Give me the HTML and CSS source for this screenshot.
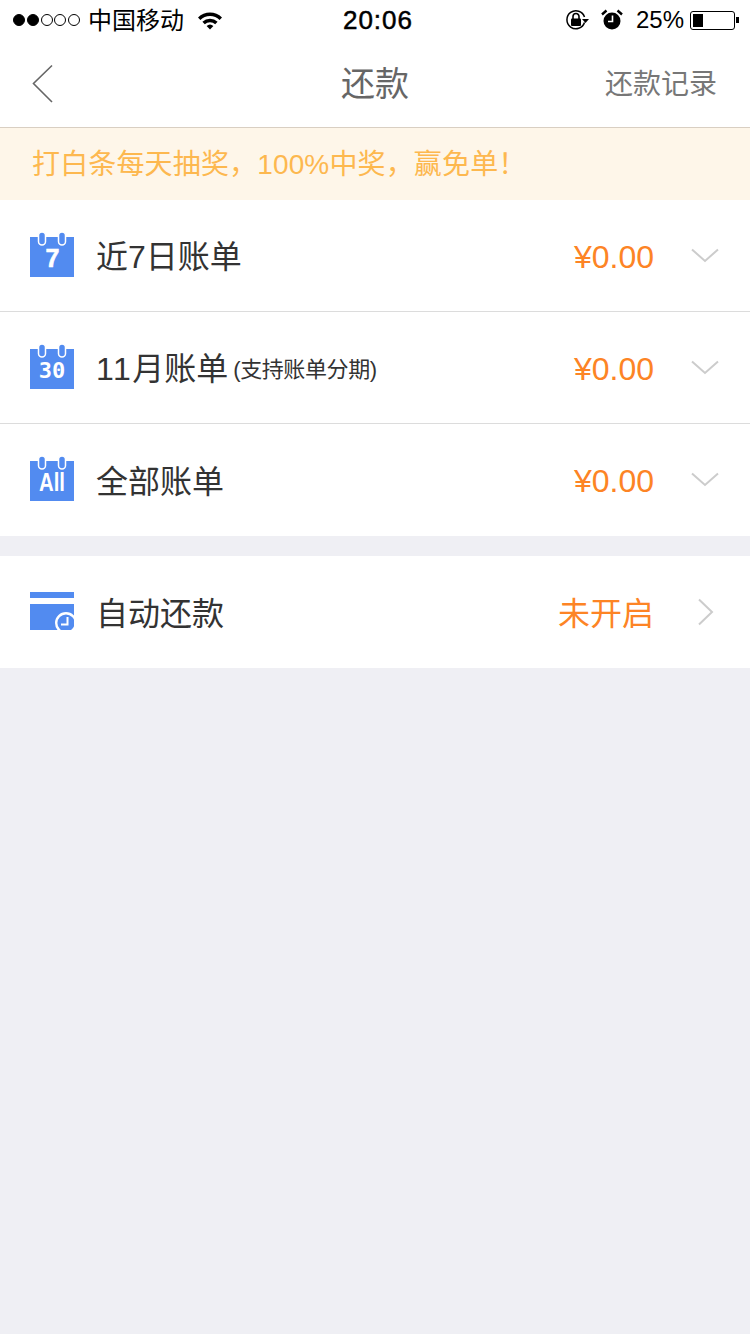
FILE: index.html
```html
<!DOCTYPE html>
<html lang="zh-CN">
<head>
    <meta charset="UTF-8">
    <meta name="viewport" content="width=device-width, initial-scale=1.0">
    <title>还款</title>
    <link rel="stylesheet" href="styles.css">
</head>
<body>
<div class="status-bar">
    <div class="status-left">
        <div class="signal">
            <span class="dot on"></span><span class="dot on"></span><span class="dot"></span><span class="dot"></span><span class="dot"></span>
        </div>
        <span class="carrier">中国移动</span>
        <svg class="wifi" width="26" height="20" viewBox="0 0 26 20">
            <path d="M1 7.5 A17 17 0 0 1 25 7.5 L22.6 10 A13.6 13.6 0 0 0 3.4 10 Z" fill="#000"/>
            <path d="M5.4 11.8 A11 11 0 0 1 20.6 11.8 L18.2 14.2 A7.6 7.6 0 0 0 7.8 14.2 Z" fill="#000"/>
            <path d="M9.6 16 A5 5 0 0 1 16.4 16 L13 19.6 Z" fill="#000"/>
        </svg>
    </div>
    <div class="status-time">20:06</div>
    <div class="status-right">
        <svg class="lock" width="24" height="22" viewBox="0 0 24 22">
            <path d="M19.5 13.5 A9 9 0 1 1 19.5 8" fill="none" stroke="#000" stroke-width="1.5"/>
            <path d="M17 10 L24 10 L20.5 14 Z" fill="#000"/>
            <rect x="6" y="9.5" width="10" height="7.5" rx="1" fill="#000"/>
            <path d="M8 10 V7.5 A3 3 0 0 1 14 7.5 V10" fill="none" stroke="#000" stroke-width="1.6"/>
        </svg>
        <svg class="alarm" width="22" height="22" viewBox="0 0 22 22">
            <circle cx="11" cy="12" r="8.5" fill="#000"/>
            <path d="M1 5.5 L5.5 1.5 M16.5 1.5 L21 5.5" stroke="#000" stroke-width="2.4" fill="none"/>
            <path d="M11.5 6.5 V12.5 H7" stroke="#fff" stroke-width="1.6" fill="none"/>
        </svg>
        <span class="battery-text">25%</span>
        <div class="battery"><div class="battery-fill"></div></div>
        <div class="battery-tip"></div>
    </div>
</div>

<div class="nav">
    <svg class="back" width="24" height="40" viewBox="0 0 24 40">
        <path d="M21 1.5 L2.5 19.5 L21 38" fill="none" stroke="#666" stroke-width="1.6"/>
    </svg>
    <div class="nav-title">还款</div>
    <div class="nav-link">还款记录</div>
</div>

<div class="banner">打白条每天抽奖，100%中奖，赢免单！</div>

<div class="group">
    <div class="row">
        <svg class="icon" width="44" height="46" viewBox="0 0 44 46">
            <path d="M0 6 H44 V46 H0 Z" fill="#528bf0"/>
            <rect x="8.5" y="1" width="7" height="13" rx="3.5" fill="#528bf0" stroke="#fff" stroke-width="1.5"/>
            <rect x="28.5" y="1" width="7" height="13" rx="3.5" fill="#528bf0" stroke="#fff" stroke-width="1.5"/>
            <text class="icon-text icon-seven" x="22.5" y="36" font-size="25" text-anchor="middle">7</text>
        </svg>
        <div class="row-label">近7日账单</div>
        <div class="row-value amount">¥0.00</div>
        <svg class="arrow-down" width="28" height="16" viewBox="0 0 28 16">
            <path d="M1 1.5 L14 13 L27 1.5" fill="none" stroke="#ccc" stroke-width="2"/>
        </svg>
    </div>
    <div class="row">
        <svg class="icon" width="44" height="46" viewBox="0 0 44 46">
            <path d="M0 6 H44 V46 H0 Z" fill="#528bf0"/>
            <rect x="8.5" y="1" width="7" height="13" rx="3.5" fill="#528bf0" stroke="#fff" stroke-width="1.5"/>
            <rect x="28.5" y="1" width="7" height="13" rx="3.5" fill="#528bf0" stroke="#fff" stroke-width="1.5"/>
            <text class="icon-text mono" x="22" y="35" font-size="22" text-anchor="middle">30</text>
        </svg>
        <div class="row-label"><span class="num">11</span>月账单<span class="row-note">(支持账单分期)</span></div>
        <div class="row-value amount">¥0.00</div>
        <svg class="arrow-down" width="28" height="16" viewBox="0 0 28 16">
            <path d="M1 1.5 L14 13 L27 1.5" fill="none" stroke="#ccc" stroke-width="2"/>
        </svg>
    </div>
    <div class="row">
        <svg class="icon" width="44" height="46" viewBox="0 0 44 46">
            <path d="M0 6 H44 V46 H0 Z" fill="#528bf0"/>
            <rect x="8.5" y="1" width="7" height="13" rx="3.5" fill="#528bf0" stroke="#fff" stroke-width="1.5"/>
            <rect x="28.5" y="1" width="7" height="13" rx="3.5" fill="#528bf0" stroke="#fff" stroke-width="1.5"/>
            <text class="icon-text" x="9" y="36" font-size="25" textLength="26" lengthAdjust="spacingAndGlyphs">All</text>
        </svg>
        <div class="row-label">全部账单</div>
        <div class="row-value amount">¥0.00</div>
        <svg class="arrow-down" width="28" height="16" viewBox="0 0 28 16">
            <path d="M1 1.5 L14 13 L27 1.5" fill="none" stroke="#ccc" stroke-width="2"/>
        </svg>
    </div>
</div>

<div class="group group-auto">
    <div class="row">
        <svg class="icon icon-auto" width="44" height="38" viewBox="0 0 44 38">
            <rect x="0" y="0" width="44" height="6" fill="#528bf0"/>
            <rect x="0" y="12" width="44" height="26" fill="#528bf0"/>
            <circle cx="36" cy="31" r="9.8" fill="#528bf0" stroke="#fff" stroke-width="2.4"/>
            <path d="M37.5 25 V32.5 H31" fill="none" stroke="#fff" stroke-width="2"/>
        </svg>
        <div class="row-label">自动还款</div>
        <div class="row-value">未开启</div>
        <svg class="arrow-right" width="28" height="28" viewBox="0 0 28 28">
            <path d="M8 1.5 L21 14 L8 26.5" fill="none" stroke="#ccc" stroke-width="2"/>
        </svg>
    </div>
</div>
</body>
</html>
```

FILE: styles.css
```css
* {
    margin: 0;
    padding: 0;
    box-sizing: border-box;
}

html, body {
    height: 100%;
}

body {
    overflow: hidden;
    background: #efeff4;
    font-family: "Liberation Sans", "Noto Sans CJK SC", sans-serif;
    color: #333;
}

/* status bar */
.status-bar {
    position: relative;
    display: flex;
    justify-content: space-between;
    align-items: center;
    height: 40px;
    padding: 0 11px 0 13px;
    background: #fff;
    color: #000;
}

.status-left,
.status-right {
    display: flex;
    align-items: center;
}

.signal {
    display: flex;
    gap: 1.75px;
}

.dot {
    width: 12px;
    height: 12px;
    border: 1px solid #000;
    border-radius: 50%;
}

.dot.on {
    background: #000;
}

.carrier {
    margin: 0 0 3px 8px;
    font-size: 24px;
}

.wifi {
    margin-left: 13px;
}

.status-time {
    position: absolute;
    left: 6px;
    right: 0;
    text-align: center;
    font-size: 26px;
    letter-spacing: 1px;
    -webkit-text-stroke: 0.5px #000;
    pointer-events: none;
}

.alarm {
    margin-left: 12px;
}

.battery-text {
    margin-left: 13px;
    font-size: 24px;
}

.battery {
    width: 45px;
    height: 19px;
    margin-left: 6px;
    padding: 2px;
    border: 1px solid #000;
    border-radius: 3px;
}

.battery-fill {
    width: 10px;
    height: 100%;
    background: #000;
}

.battery-tip {
    width: 3px;
    height: 6px;
    margin-left: 1px;
    background: #000;
}

/* nav */
.nav {
    display: flex;
    justify-content: space-between;
    align-items: center;
    position: relative;
    height: 88px;
    padding: 0 33px 0 31px;
    background: #fff;
    border-bottom: 1px solid #d9cfc2;
}

.nav-title {
    position: absolute;
    left: 0;
    right: 0;
    text-align: center;
    font-size: 34px;
    line-height: 84px;
    color: #666;
    pointer-events: none;
}

.nav-link {
    margin-bottom: 3px;
    font-size: 28px;
    color: #777;
}

.banner {
    height: 72px;
    padding-left: 32px;
    background: #fef6e9;
    color: #fdb84f;
    font-size: 28px;
    line-height: 74px;
    letter-spacing: 0.15px;
}

/* rows */
.group {
    background: #fff;
}

.group-auto {
    margin-top: 20px;
}

.row {
    display: flex;
    align-items: center;
    height: 112px;
    padding: 0 31px 0 30px;
    border-bottom: 1px solid #dcdcdc;
}

.row:last-child {
    border-bottom: 0;
}

.icon {
    flex-shrink: 0;
    margin-bottom: 4px;
}

.icon-auto {
    margin-bottom: 2px;
}

.icon-text {
    font-family: "Liberation Sans", sans-serif;
    font-weight: 700;
    fill: #fff;
}

.icon-text.mono {
    font-family: "DejaVu Sans Mono", monospace;
}

.icon-seven {
    stroke: #fff;
    stroke-width: 0.6px;
}

.row-label {
    flex: 1;
    margin: 0 0 3px 22px;
    font-size: 32px;
}

.num {
    letter-spacing: 1.5px;
}

.row-note {
    margin-left: 5px;
    font-size: 22px;
    letter-spacing: -0.4px;
    vertical-align: 3px;
}

.row-value {
    margin-bottom: 3px;
    font-size: 32px;
    color: #fd8425;
}

.row-value.amount {
    margin-bottom: 0;
    padding-top: 3px;
}

.arrow-down,
.arrow-right {
    flex-shrink: 0;
    margin-left: 37px;
}
```
